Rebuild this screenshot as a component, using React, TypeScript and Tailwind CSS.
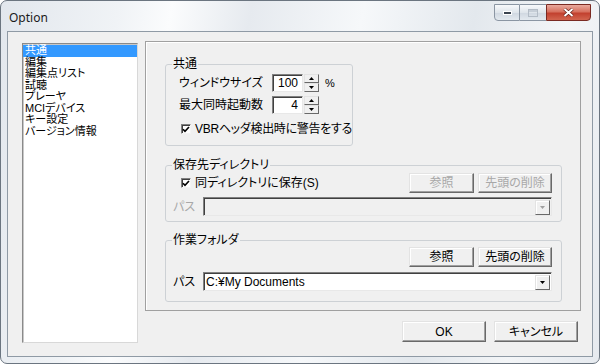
import React from 'react';

const ui = "font-['Liberation_Sans','Noto_Sans_CJK_JP',sans-serif] [font-feature-settings:'palt'] text-[12px] leading-[14px]";

function Btn({ label, className = '', disabled = false }) {
  return (
    <div
      className={`flex items-center justify-center bg-[#f0f0f0] border border-t-[#e3e3e3] border-l-[#e3e3e3] border-r-[#696969] border-b-[#696969] shadow-[inset_-1px_-1px_0_#a0a0a0,inset_1px_1px_0_#ffffff] ${disabled ? 'text-[#a8a8a8]' : 'text-black'} ${className}`}
    >
      {label}
    </div>
  );
}

function Check() {
  return (
    <div className="w-[10px] h-[10px] shrink-0 bg-white border border-t-[#808080] border-l-[#808080] border-r-[#f4f4f4] border-b-[#f4f4f4] shadow-[inset_1px_1px_0_#404040] flex items-center justify-center">
      <svg width="8" height="7" viewBox="0 0 8 7">
        <path d="M1 3.2 L3 5.4 L7 1" stroke="#000" strokeWidth="1.6" fill="none" />
      </svg>
    </div>
  );
}

function Arrow({ up = false, color = '#000' }) {
  return (
    <svg width="5" height="3" viewBox="0 0 5 3">
      <path d={up ? 'M0 3 L2.5 0 L5 3 Z' : 'M0 0 L5 0 L2.5 3 Z'} fill={color} />
    </svg>
  );
}

function SpinEdit({ value }) {
  return (
    <div className="flex h-[18px]">
      <div className="w-[31px] h-[18px] bg-white border border-t-[#808080] border-l-[#808080] border-r-[#e8e8e8] border-b-[#e8e8e8] shadow-[inset_1px_1px_0_#404040] flex items-center justify-end pr-[4px]">
        {value}
      </div>
      <div className="w-[15px] h-[18px] ml-[1px] flex flex-col">
        <div className="h-[9px] flex items-center justify-center bg-[#f0f0f0] border border-t-[#e3e3e3] border-l-[#e3e3e3] border-r-[#696969] border-b-[#696969]">
          <Arrow up />
        </div>
        <div className="h-[9px] flex items-center justify-center bg-[#f0f0f0] border border-t-[#e3e3e3] border-l-[#e3e3e3] border-r-[#696969] border-b-[#696969]">
          <Arrow />
        </div>
      </div>
    </div>
  );
}

function Combo({ text = '', disabled = false }) {
  return (
    <div
      className={`flex-1 h-[19px] flex items-center border border-t-[#808080] border-l-[#808080] border-r-[#e8e8e8] border-b-[#e8e8e8] shadow-[inset_1px_1px_0_#404040] ${disabled ? 'bg-[#f0f0f0]' : 'bg-white'}`}
    >
      <div className="flex-1 pl-[2px] pt-[1px] truncate">{text}</div>
      <div className="w-[15px] h-[15px] mr-[1px] mt-[1px] flex items-center justify-center bg-[#f0f0f0] border border-t-[#e3e3e3] border-l-[#e3e3e3] border-r-[#696969] border-b-[#696969] shadow-[inset_1px_1px_0_#ffffff]">
        <Arrow color={disabled ? '#a0a0a0' : '#000'} />
      </div>
    </div>
  );
}

function Group({ title, className, children }) {
  return (
    <div className={`relative border border-[#cdd1d5] rounded-[3px] ${className}`}>
      <span className="absolute -top-[8px] left-[6px] px-[1px] bg-[#f0f0f0] leading-[14px]">{title}</span>
      {children}
    </div>
  );
}

const items = ['共通', '編集', '編集点リスト', '試聴', 'プレーヤ', 'MCIデバイス', 'キー設定', 'バージョン情報'];

export default function App() {
  return (
    <div className={`w-[600px] h-[364px] bg-white ${ui}`}>
      <div className="w-[600px] h-[364px] flex flex-col rounded-[7px] border border-[#6b7580] overflow-hidden bg-[linear-gradient(100deg,#e2e7ed_0%,#f0f3f6_18%,#fbfcfd_26%,#e6eaef_38%,#f6f8fa_55%,#e3e8ed_72%,#f3f5f7_86%,#e6eaef_100%)]">
        {/* title bar */}
        <div className="h-[30px] shrink-0 flex items-start">
          <div className="ml-[8px] mt-[9px] font-['Noto_Sans',sans-serif] text-[12px] leading-[15px] text-[#1a1a1a] [font-feature-settings:normal]">
            Option
          </div>
          <div className="ml-auto mr-[8px] mt-[3px] flex h-[17px]">
            <div className="w-[26px] h-[17px] flex items-center justify-center border border-[#8b96a3] rounded-bl-[4px] bg-[linear-gradient(#f7f9fb,#dfe5eb_50%,#cfd7e0_51%,#e3e9ef)]">
              <div className="w-[9px] h-[4px] bg-[#3b4450] border border-white" />
            </div>
            <div className="w-[26px] h-[17px] flex items-center justify-center border-y border-[#8b96a3] bg-[linear-gradient(#f7f9fb,#dfe5eb_50%,#cfd7e0_51%,#e3e9ef)]">
              <div className="w-[10px] h-[8px] border border-[#b3bcc6] shadow-[inset_0_2px_0_#c6ced7]" />
            </div>
            <div className="w-[45px] h-[17px] flex items-center justify-center border border-[#7a2a22] rounded-br-[4px] bg-[linear-gradient(#e9a99d,#d7715f_45%,#c2412f_55%,#d2654f)]">
              <svg width="11" height="9" viewBox="0 0 11 9">
                <path d="M1.5 1 L9.5 8 M9.5 1 L1.5 8" stroke="#5a1a14" strokeWidth="3.2" />
                <path d="M1.5 1 L9.5 8 M9.5 1 L1.5 8" stroke="#fff" strokeWidth="2" />
              </svg>
            </div>
          </div>
        </div>

        {/* client area */}
        <div className="mx-[6px] mb-[6px] flex-1 border border-[#8f9aa5] bg-[#f0f0f0] flex items-start pt-[9px] pl-[14px]">
          {/* list */}
          <div className="mt-[2px] w-[116px] h-[300px] bg-white border border-t-[#8a8a8a] border-l-[#8a8a8a] border-r-[#d8d8d8] border-b-[#d8d8d8] shadow-[inset_1px_1px_0_#c8c8c8] pt-[1px]">
            {items.map((t, i) => (
              <div
                key={t}
                className={`h-[11.5px] text-[11px] leading-[11.5px] pl-[2px] whitespace-nowrap ${i === 0 ? 'bg-[#3399ff] text-white' : 'text-black'}`}
              >
                {t}
              </div>
            ))}
          </div>

          {/* right side */}
          <div className="ml-[7px] flex flex-col">
            <div className="w-[436px] h-[270px] border border-[#a0a0a0] shadow-[inset_1px_1px_0_#ffffff] pl-[19px] pt-[22px] flex flex-col">
              <Group title="共通" className="w-[188px] h-[82px] pt-[9px] pl-[13px]">
                <div className="flex items-center h-[18px]">
                  <div className="w-[93px]">ウィンドウサイズ</div>
                  <SpinEdit value="100" />
                  <div className="ml-[6px] text-[11px]">%</div>
                </div>
                <div className="flex items-center h-[18px] mt-[4px]">
                  <div className="w-[93px]">最大同時起動数</div>
                  <SpinEdit value="4" />
                </div>
                <div className="flex items-center h-[14px] mt-[8px] pl-[2px]">
                  <Check />
                  <div className="ml-[4px] whitespace-nowrap tracking-[-0.3px]">VBRヘッダ検出時に警告をする</div>
                </div>
              </Group>

              <Group title="保存先ディレクトリ" className="mt-[19px] w-[397px] h-[57px] pt-[7px] pl-[15px] pr-[9px]">
                <div className="flex items-center h-[20px]">
                  <Check />
                  <div className="ml-[4px]">同ディレクトリに保存(S)</div>
                  <Btn label="参照" disabled className="ml-auto w-[65px] h-[20px]" />
                  <Btn label="先頭の削除" disabled className="ml-[4px] w-[74px] h-[20px]" />
                </div>
                <div className="flex items-center h-[19px] mt-[4px] -ml-[8px]">
                  <div className="w-[30px] text-[#a8a8a8]">パス</div>
                  <Combo disabled />
                </div>
              </Group>

              <Group title="作業フォルダ" className="mt-[18px] w-[397px] h-[62px] pt-[6px] pl-[7px] pr-[9px]">
                <div className="flex items-center justify-end h-[20px]">
                  <Btn label="参照" className="w-[65px] h-[20px]" />
                  <Btn label="先頭の削除" className="ml-[4px] w-[74px] h-[20px]" />
                </div>
                <div className="flex items-center h-[19px] mt-[5px]">
                  <div className="w-[30px]">パス</div>
                  <Combo text="C:¥My Documents" />
                </div>
              </Group>
            </div>

            <div className="mt-[10px] flex justify-end gap-[8px] pr-[3px]">
              <Btn label="OK" className="w-[84px] h-[21px]" />
              <Btn label="キャンセル" className="w-[84px] h-[21px]" />
            </div>
          </div>
        </div>
      </div>
    </div>
  );
}
